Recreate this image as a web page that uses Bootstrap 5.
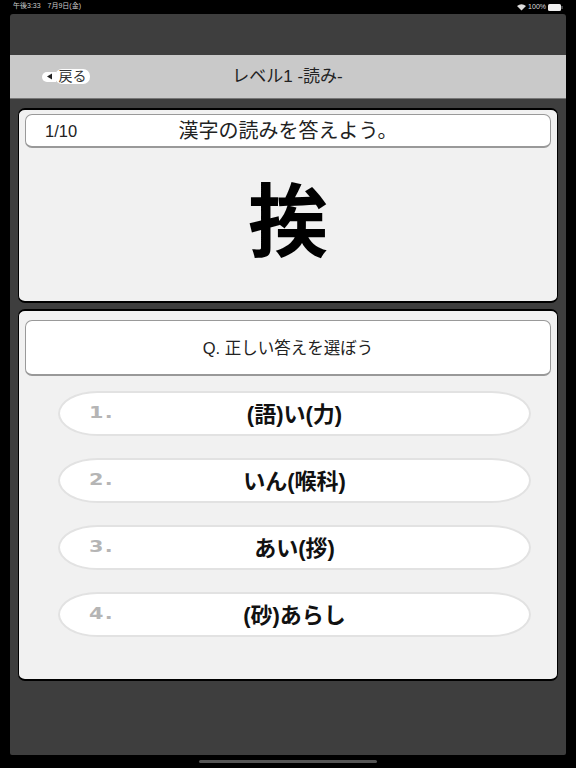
<!DOCTYPE html>
<html lang="ja">
<head>
<meta charset="utf-8">
<title>レベル1 -読み-</title>
<link href="https://cdn.jsdelivr.net/npm/bootstrap@5.3.0/dist/css/bootstrap.min.css" rel="stylesheet">
<style>
html,body{height:100%;}
body{background:#000;font-family:"Liberation Sans","Noto Sans CJK JP",sans-serif;color:#111;width:576px;height:768px;overflow:hidden;}
.status-strip{height:14px;padding:0 13px 0 13px;color:#ddd;font-size:7px;line-height:12px;}
.status-strip .clock{color:#ccc;word-spacing:5px;}
.status-right{gap:2px;}
.app-panel{margin:0 10px;height:741px;background:#3e3e3e;border-radius:3px 3px 2px 2px;padding-top:41px;}
.top-bar{height:44px;background:#c9c9c9;border-bottom:1px solid #777;position:relative;padding-left:32px;}
.back-arrow{background:#fff;border-radius:6px 0 0 6px;height:10px;width:14px;}
.back-label{background:#fff;border-radius:7px;height:15px;width:35px;font-size:14px;line-height:15px;color:#333;text-align:center;margin-left:-1px;}
.top-title{font-size:17px;color:#222;position:absolute;left:-1px;right:0;top:1px;line-height:42px;text-align:center;}
.panel-card{background:#f1f1f1;border:1px solid #000;border-top-width:2px;border-bottom-width:2px;border-radius:7px;margin:0 8px;padding:4px 6px 3px;}
.panel-kanji{height:195px;margin-top:9px;}
.panel-answers{height:372px;margin-top:6px;padding-top:9px;}
.head-box{background:#fff;border:1px solid #999;border-bottom-width:2px;border-radius:7px;height:34px;position:relative;font-size:20px;line-height:32px;text-align:center;color:#222;}
.head-box .count{position:absolute;left:19px;top:0;font-size:16.5px;}
.big-kanji{font-size:80px;font-weight:700;line-height:1;color:#000;text-align:center;margin-top:27px;font-family:"Noto Sans CJK JP",sans-serif;}
.ask-box{background:#fff;border:1px solid #999;border-bottom-width:2px;border-radius:7px;height:56px;font-size:16.5px;line-height:55px;text-align:center;color:#222;}
.choice-stack{gap:22px;margin:15px 20px 0 33px;}
.choice-pill{background:#fff;border:2px solid #e2e2e2;border-radius:40px/23px;height:45px;position:relative;font-size:22px;font-weight:700;line-height:44px;text-align:center;color:#111;}
.choice-num{position:absolute;left:29px;top:-2px;font-family:"DejaVu Sans",sans-serif;font-weight:700;font-size:16px;color:#b5b5b5;letter-spacing:1px;transform:scaleX(1.3);transform-origin:left center;}
.home-bar{position:absolute;left:199px;top:760px;width:178px;height:3px;background:#555;border-radius:2px;}
</style>
</head>
<body>
<div class="status-strip d-flex justify-content-between">
  <span class="clock">午後3:33 7月9日(金)</span>
  <span class="status-right d-flex align-items-center">
    <svg width="9" height="7" viewBox="0 0 18 14"><path d="M9 13 L0 4 Q9 -3 18 4 Z" fill="#ddd"/></svg>
    <span>100%</span>
    <svg width="15" height="7" viewBox="0 0 15 7"><rect width="13" height="7" rx="1.5" fill="#eee"/><rect x="13.5" y="2" width="1" height="3" fill="#888"/></svg>
  </span>
</div>
<div class="app-panel">
  <div class="top-bar d-flex align-items-center">
    <div class="back-arrow d-flex align-items-center justify-content-center">
      <svg width="7" height="7" viewBox="0 0 7 7"><path d="M6 0.5V6.5L1 3.5Z" fill="#222"/></svg>
    </div>
    <div class="back-label">戻る</div>
    <div class="top-title">レベル1 -読み-</div>
  </div>
  <div class="panel-card panel-kanji">
    <div class="head-box"><span class="count">1/10</span>漢字の読みを答えよう。</div>
    <div class="big-kanji">挨</div>
  </div>
  <div class="panel-card panel-answers">
    <div class="ask-box">Q. 正しい答えを選ぼう</div>
    <div class="choice-stack d-flex flex-column">
      <div class="choice-pill"><span class="choice-num">1.</span>(語)い(力)</div>
      <div class="choice-pill"><span class="choice-num">2.</span>いん(喉科)</div>
      <div class="choice-pill"><span class="choice-num">3.</span>あい(拶)</div>
      <div class="choice-pill"><span class="choice-num">4.</span>(砂)あらし</div>
    </div>
  </div>
</div>
<div class="home-bar"></div>
</body>
</html>
